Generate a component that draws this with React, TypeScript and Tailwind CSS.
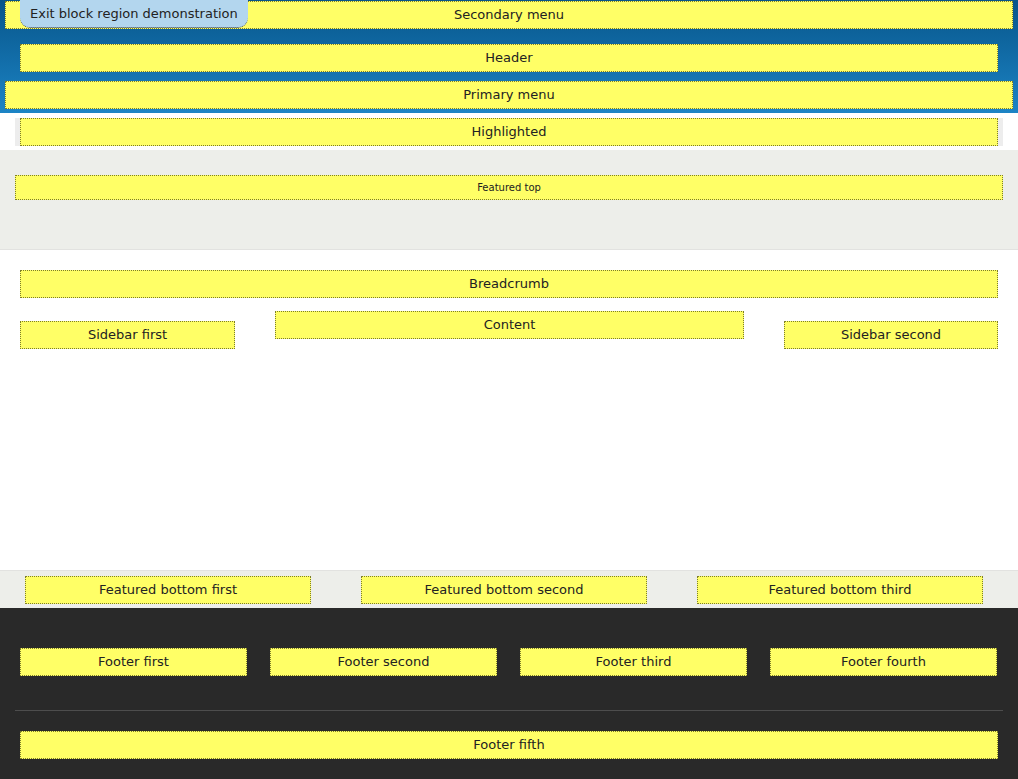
import React from 'react'

function Region({ label, className = '' }: { label: string; className?: string }) {
  return (
    <div
      className={`flex h-[28px] items-center justify-center border border-dotted border-[#7d7d2a] bg-[#ffff66] text-[13px] text-[#222] ${className}`}
    >
      {label}
    </div>
  )
}

export default function App() {
  return (
    <div className="min-h-screen bg-white font-['DejaVu_Sans','Liberation_Sans',sans-serif] text-[#333]">
      {/* Header band */}
      <header className="relative h-[113px] bg-gradient-to-b from-[#07558a] to-[#1c84c5] pt-px">
        <Region label="Secondary menu" className="mx-[5px]" />
        <Region label="Header" className="mt-[15px] mx-[20px]" />
        <Region label="Primary menu" className="mt-[9px] mx-[5px]" />

        {/* Exit link */}
        <a
          href="#"
          className="absolute left-[20px] top-0 flex h-[28px] w-[228px] items-center rounded-b-[10px] border-b border-dotted border-[#333] bg-[#b3d6ee] pl-[10px] text-[13px] text-[#222]"
        >
          Exit block region demonstration
        </a>
      </header>

      {/* Highlighted */}
      <div className="mt-[5px] mx-[15px] bg-[#ededed] px-[5px]">
        <Region label="Highlighted" />
      </div>

      {/* Featured top */}
      <section className="mt-[4px] h-[100px] border-b border-[#e2e2e0] bg-[#edeeea] pt-[25px]">
        <div className="mx-[15px] flex h-[25px] items-center justify-center border border-dotted border-[#7d7d2a] bg-[#ffff66] text-[10px] text-[#222]">
          Featured top
        </div>
      </section>

      {/* Main */}
      <main className="h-[320px] pt-[20px]">
        <Region label="Breadcrumb" className="mx-[20px]" />
        <div className="mt-[13px] flex items-start">
          <Region label="Sidebar first" className="ml-[20px] mt-[10px] w-[215px]" />
          <Region label="Content" className="ml-[40px] w-[469px]" />
          <Region label="Sidebar second" className="ml-[40px] mt-[10px] w-[214px]" />
        </div>
      </main>

      {/* Featured bottom */}
      <section className="h-[38px] border-t border-[#e2e2e0] bg-[#edeeea] pt-[5px]">
        <div className="ml-[25px] flex gap-[50px]">
          <Region label="Featured bottom first" className="w-[286px]" />
          <Region label="Featured bottom second" className="w-[286px]" />
          <Region label="Featured bottom third" className="w-[286px]" />
        </div>
      </section>

      {/* Footer */}
      <footer className="h-[171px] bg-[#292929] pt-[40px]">
        <div className="ml-[20px] flex gap-[23px]">
          <Region label="Footer first" className="w-[227px]" />
          <Region label="Footer second" className="w-[227px]" />
          <Region label="Footer third" className="w-[227px]" />
          <Region label="Footer fourth" className="w-[227px]" />
        </div>
        <div className="mt-[34px] mx-[15px] h-px bg-[#4d4d4d]" />
        <Region label="Footer fifth" className="mt-[20px] mx-[20px]" />
      </footer>
    </div>
  )
}
